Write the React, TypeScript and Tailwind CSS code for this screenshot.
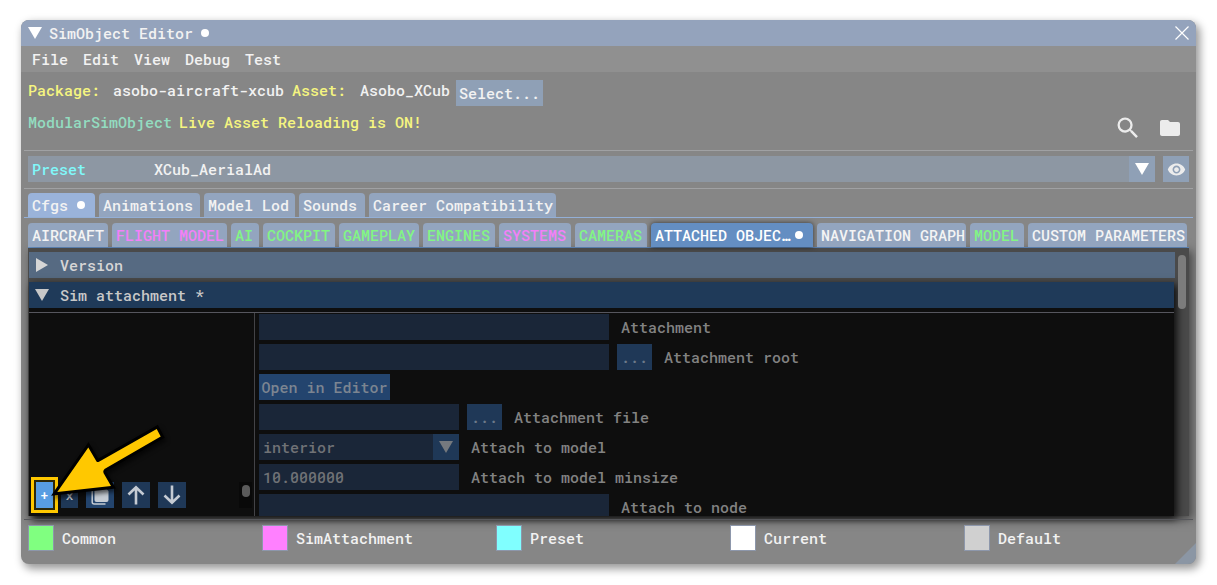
import type { ComponentProps, ReactNode } from "react";
import { MdFolder, MdSearch, MdVisibility } from "react-icons/md";

const menus = [
  { name: "File", width: "w-[51px]" },
  { name: "Edit", width: "w-[51px]" },
  { name: "View", width: "w-[51px]" },
  { name: "Debug", width: "w-[60px]" },
  { name: "Test", width: "w-[51px]" },
];

const mainTabs = [
  { name: "Cfgs", width: "w-[67px]", active: true },
  { name: "Animations", width: "w-[101px]" },
  { name: "Model Lod", width: "w-[91px]" },
  { name: "Sounds", width: "w-[66px]" },
  { name: "Career Compatibility", width: "w-[187px]" },
];

const cfgTabs = [
  { name: "AIRCRAFT", width: "w-[80px]", color: "text-[#f4f4f4]" },
  { name: "FLIGHT MODEL", width: "w-[115px]", color: "text-[#f280f8]" },
  { name: "AI", width: "w-[28px]", color: "text-[#82f584]" },
  { name: "COCKPIT", width: "w-[72px]", color: "text-[#82f584]" },
  { name: "GAMEPLAY", width: "w-[80px]", color: "text-[#82f584]" },
  { name: "ENGINES", width: "w-[72px]", color: "text-[#82f584]" },
  { name: "SYSTEMS", width: "w-[72px]", color: "text-[#f280f8]" },
  { name: "CAMERAS", width: "w-[72px]", color: "text-[#82f584]" },
  { name: "ATTACHED OBJEC…", width: "w-[162px]", color: "text-white", active: true },
  { name: "NAVIGATION GRAPH", width: "w-[149px]", color: "text-[#f4f4f4]" },
  { name: "MODEL", width: "w-[54px]", color: "text-[#82f584]" },
  { name: "CUSTOM PARAMETERS", width: "w-[159px]", color: "text-[#f4f4f4]" },
];

const legend = [
  { name: "Common", color: "bg-[#80ff80]" },
  { name: "SimAttachment", color: "bg-[#ff80ff]" },
  { name: "Preset", color: "bg-[#80ffff]" },
  { name: "Current", color: "bg-white" },
  { name: "Default", color: "bg-[#d0d0d0]" },
];

function TriangleDown({ className }: { className?: string }) {
  return (
    <svg viewBox="0 0 14 12" className={`h-3 w-3.5 shrink-0 ${className ?? ""}`} fill="currentColor">
      <path d="M0 0H14L7 12Z" />
    </svg>
  );
}

function MoveArrow({ className }: { className?: string }) {
  return (
    <svg
      viewBox="0 0 20 20"
      className={`size-5 ${className ?? ""}`}
      fill="none"
      stroke="currentColor"
      strokeWidth="2.6"
    >
      <path d="M10 19.5V2.5M2.5 9.5 10 2.2 17.5 9.5" />
    </svg>
  );
}

function CopyIcon() {
  return (
    <svg viewBox="0 0 20 20" className="size-5" fill="currentColor">
      <path d="M5 1.5H14L18.5 6V15Q18.5 17 16.5 17H6.5Q4.5 17 4.5 15V3Q4.5 1.5 6 1.5Z" />
      <path d="M2.2 3.5V17Q2.2 19 4.2 19H15.5" fill="none" stroke="currentColor" strokeWidth="1.5" />
    </svg>
  );
}

function Separator() {
  return <hr className="mx-[3px] border-0 border-t border-[#a0a1a3]" />;
}

function Dot({ className }: { className?: string }) {
  return <span className={`size-2 shrink-0 rounded-full bg-white ${className ?? ""}`} />;
}

function TextField({ id, label, width, value = "", browse = false }: {
  id: string;
  label: string;
  width: string;
  value?: string;
  browse?: boolean;
}) {
  return (
    <div className="flex h-[26px] shrink-0 items-center">
      <input
        id={id}
        type="text"
        defaultValue={value}
        className={`h-full bg-[#1a2638] px-1 text-[#707276] outline-none ${width}`}
      />
      {browse && (
        <button type="button" className="ml-2 h-full w-[35px] bg-[#1f3857] text-[#6d7a8a]">
          ...
        </button>
      )}
      <label htmlFor={id} className="ml-3 leading-4 text-[#828282]">
        {label}
      </label>
    </div>
  );
}

function ToolButton({ children, className, ...props }: ComponentProps<"button"> & { children: ReactNode }) {
  return (
    <button
      type="button"
      className={`flex h-[26px] items-center justify-center text-[#c5cbd3] ${className ?? ""}`}
      {...props}
    >
      {children}
    </button>
  );
}

function PointerArrow() {
  return (
    <svg
      viewBox="0 0 120 70"
      className="pointer-events-none absolute bottom-5 left-[21px] h-[70px] w-[120px] overflow-visible drop-shadow-[2px_3px_2px_rgba(0,0,0,0.6)]"
    >
      <path
        d="M7.3 66 38.3 21.5 46.5 35.5Q47.5 36.5 49 35.7L106.7 3 110.7 10.5 54.5 43Q52.5 45 53.5 47L61 60Z"
        fill="#ffc800"
        stroke="#000"
        strokeWidth="6"
        paintOrder="stroke"
      />
    </svg>
  );
}

function AttachmentList() {
  return (
    <div className="relative flex w-[226px] shrink-0 items-end border-r border-[#434347] pb-2 pl-[7px]">
      <div className="flex flex-1 gap-2">
        <ToolButton
          aria-label="Add attachment"
          className="w-[17px] bg-[#589de2] text-white ring-2 ring-[#2e2808] outline-3 outline-offset-2 outline-[#ffc800]"
        >
          <span className="text-[13px]">+</span>
        </ToolButton>
        <ToolButton aria-label="Remove attachment" className="w-[17px] bg-[#1f3857]">
          <span className="text-[13px]">x</span>
        </ToolButton>
        <ToolButton aria-label="Duplicate attachment" className="w-7 bg-[#23446d]">
          <CopyIcon />
        </ToolButton>
        <ToolButton aria-label="Move up" className="w-7 bg-[#1f3857]">
          <MoveArrow />
        </ToolButton>
        <ToolButton aria-label="Move down" className="w-7 bg-[#1f3857]">
          <MoveArrow className="rotate-180" />
        </ToolButton>
      </div>
      <div className="mr-0.5 h-[26px] w-[13px] bg-[#090909] px-[3px] pt-[3px]">
        <div className="h-3 w-2 rounded-full bg-[#5b5b5b]" />
      </div>
      <PointerArrow />
    </div>
  );
}

function AttachmentForm() {
  return (
    <form className="flex flex-1 flex-col gap-1 pt-px pl-1">
      <TextField id="attachment" label="Attachment" width="w-[350px]" />
      <TextField id="attachment-root" label="Attachment root" width="w-[350px]" browse />
      <button type="button" className="h-[26px] w-[131px] shrink-0 bg-[#23446e] text-[#7c8591]">
        Open in Editor
      </button>
      <TextField id="attachment-file" label="Attachment file" width="w-[200px]" browse />
      <div className="flex h-[26px] shrink-0 items-center">
        <div className="relative h-full w-[200px]">
          <select
            id="attach-model"
            className="h-full w-full appearance-none bg-[#1a2638] px-1 text-[#707276] outline-none"
          >
            <option>interior</option>
          </select>
          <span className="pointer-events-none absolute inset-y-0 right-0 flex w-[26px] items-center justify-center bg-[#1f3857] text-[#75797e]">
            <TriangleDown />
          </span>
        </div>
        <label htmlFor="attach-model" className="ml-3 leading-4 text-[#828282]">
          Attach to model
        </label>
      </div>
      <TextField id="minsize" label="Attach to model minsize" width="w-[200px]" value="10.000000" />
      <TextField id="attach-node" label="Attach to node" width="w-[350px]" />
    </form>
  );
}

export default function App() {
  return (
    <main className="bg-white px-[21px] pt-5 pb-5 font-['Roboto_Mono','DejaVu_Sans_Mono',monospace] text-[15px] leading-5 font-medium whitespace-nowrap text-[#f2f2f2]">
      <section className="relative overflow-hidden rounded-lg bg-[#868686] shadow-[3px_4px_9px_1px_rgba(0,0,0,0.4)]">
        <header className="flex h-[26px] items-center bg-[#94a3bc] px-[7px]">
          <TriangleDown className="text-white" />
          <h1 className="ml-[7px] w-[152px]">SimObject Editor</h1>
          <Dot />
          <button type="button" aria-label="Close" className="ml-auto">
            <svg viewBox="0 0 14 14" className="size-3.5" stroke="#fff" strokeWidth="1.2">
              <path d="M.5.5l13 13M13.5.5l-13 13" />
            </svg>
          </button>
        </header>

        <nav className="flex h-[26px] items-center bg-[#909090] pl-[11px]">
          {menus.map((menu) => (
            <button key={menu.name} type="button" className={`text-left ${menu.width}`}>
              {menu.name}
            </button>
          ))}
        </nav>

        <div className="flex items-start px-[7px] pt-2">
          <span className="w-[85px] text-[#f5f580]">Package:</span>
          <span className="w-[179px]">asobo-aircraft-xcub</span>
          <span className="w-[68px] text-[#f5f580]">Asset:</span>
          <span className="w-24">Asobo_XCub</span>
          <button type="button" className="h-[26px] w-[87px] bg-[#8fa0b6]">
            Select...
          </button>
        </div>
        <div className="flex h-11 items-start px-[7px] pt-1.5">
          <span className="w-[151px] text-[#93dcc0]">ModularSimObject</span>
          <span className="text-[#f5f580]">Live Asset Reloading is ON!</span>
          <div className="ml-auto flex items-center gap-4 pt-0.5 pr-[7px] text-[#ececec]">
            <button type="button" aria-label="Search">
              <MdSearch className="size-7" />
            </button>
            <button type="button" aria-label="Open folder">
              <MdFolder className="size-6" />
            </button>
          </div>
        </div>

        <Separator />
        <div className="flex px-[7px] pt-[5px] pb-1.5">
          <label htmlFor="preset" className="h-[26px] w-[122px] bg-[#8d97a3] pt-[3px] pl-1 text-[#80f8fa]">
            Preset
          </label>
          <div className="relative flex-1">
            <select id="preset" className="h-[26px] w-full appearance-none bg-[#8d97a3] px-1 outline-none">
              <option>XCub_AerialAd</option>
            </select>
            <span className="pointer-events-none absolute inset-y-0 right-0 flex w-[26px] items-center justify-center bg-[#8fa0b6] text-white">
              <TriangleDown />
            </span>
          </div>
          <button
            type="button"
            aria-label="Toggle visibility"
            className="ml-2 flex size-[26px] items-center justify-center bg-[#8fa0b6] text-[#ececec]"
          >
            <MdVisibility className="size-[19px]" />
          </button>
        </div>
        <Separator />

        <div className="mx-[3px] flex gap-1 border-b border-[#93afd6] pt-1 pl-1">
          {mainTabs.map((tab) => (
            <button
              key={tab.name}
              type="button"
              className={`flex h-6 items-center rounded-t pl-1 ${tab.width} ${tab.active ? "bg-[#9ab3da]" : "bg-[#93a5bf]"}`}
            >
              {tab.name}
              {tab.active && <Dot className="mr-2.5 ml-auto" />}
            </button>
          ))}
        </div>

        <div className="mx-[7px] flex gap-1 border-b border-[#648ec2] pt-[5px]">
          {cfgTabs.map((tab) => (
            <button
              key={tab.name}
              type="button"
              className={`flex h-6 items-center rounded-t pl-1 ${tab.width} ${tab.color} ${tab.active ? "bg-[#648ec2] shadow-[0_0_5px_rgba(0,0,0,0.6)]" : "bg-[#93a5bf]"}`}
            >
              {tab.name}
              {tab.active && <Dot className="mr-2.5 ml-auto" />}
            </button>
          ))}
        </div>

        <div className="mx-[7px] flex bg-[#4a4a4a] pt-1 pl-px shadow-[3px_3px_9px_rgba(0,0,0,0.5)]">
          <div className="flex-1">
            <button type="button" className="flex h-[26px] w-full items-center bg-[#566a82] pl-[7px] text-[#d6d6d6]">
              <svg viewBox="0 0 12 14" className="h-3.5 w-3" fill="currentColor">
                <path d="M0 0V14L12 7Z" />
              </svg>
              <span className="ml-3">Version</span>
            </button>
            <div className="mt-1 mr-px bg-[#0e0e0e] shadow-[3px_3px_8px_rgba(0,0,0,0.85)]">
              <button type="button" className="flex h-[26px] w-full items-center bg-[#1f3a59] pl-1.5 text-[#c8c8c8]">
                <TriangleDown />
                <span className="ml-[11px]">Sim attachment *</span>
              </button>
              <div className="mt-1 flex h-[204px] overflow-hidden border-t border-[#56565e]">
                <AttachmentList />
                <AttachmentForm />
              </div>
            </div>
          </div>
          <div className="w-3.5 pt-[3px] pl-[3px]">
            <div className="h-[54px] w-2 rounded-full bg-[#7c7c7c]" />
          </div>
        </div>

        <footer className="relative mt-[3px] pb-3.5">
          <hr className="mx-[3px] border-0 border-t border-[#55565a]" />
          <ul className="flex pt-1.5 pl-2">
            {legend.map((item) => (
              <li key={item.name} className="flex w-[234px] shrink-0 items-center">
                <span className={`size-6 outline outline-[#8d97ab] ${item.color}`} />
                <span className="ml-[9px]">{item.name}</span>
              </li>
            ))}
          </ul>
          <svg viewBox="0 0 21 21" className="absolute right-0 bottom-0 size-[21px]" fill="#8b96a4">
            <path d="M21 0V21H0Z" />
          </svg>
        </footer>
      </section>
    </main>
  );
}
